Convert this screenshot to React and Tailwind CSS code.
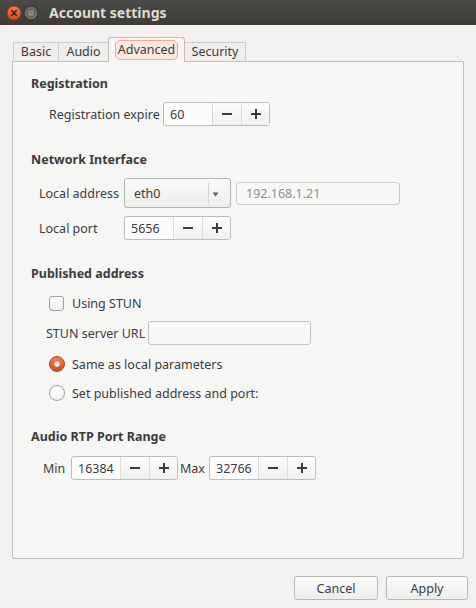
import React from "react";

function Minus() {
  return (
    <svg width="10" height="10" viewBox="0 0 10 10">
      <rect x="0" y="4" width="10" height="2" fill="#3c3c3c" />
    </svg>
  );
}
function Plus() {
  return (
    <svg width="10" height="10" viewBox="0 0 10 10">
      <rect x="0" y="4" width="10" height="2" fill="#3c3c3c" />
      <rect x="4" y="0" width="2" height="10" fill="#3c3c3c" />
    </svg>
  );
}

function Spin({ value }) {
  return (
    <div className="flex h-[24px] rounded-[3px] border border-[#bdbdba] bg-[#fcfcfc] overflow-hidden">
      <div className="w-[48px] flex items-center pl-[6px] pt-[2px] text-[#3c3c3c]">{value}</div>
      <div className="w-[29px] border-l border-[#d9d9d6] flex items-center justify-center bg-gradient-to-b from-[#fbfbfb] to-[#f1f1f0]">
        <Minus />
      </div>
      <div className="w-[28px] border-l border-[#d9d9d6] flex items-center justify-center bg-gradient-to-b from-[#fbfbfb] to-[#f1f1f0]">
        <Plus />
      </div>
    </div>
  );
}

function Heading({ children, className }) {
  return (
    <div className={"h-[18px] leading-[18px] pt-[1px] font-bold text-[#3c3c3c] " + className}>{children}</div>
  );
}

function Radio({ checked }) {
  if (checked) {
    return (
      <svg width="16" height="16" viewBox="0 0 16 16">
        <defs>
          <linearGradient id="rg" x1="0" y1="0" x2="0" y2="1">
            <stop offset="0" stopColor="#f2865a" />
            <stop offset="1" stopColor="#d34d1d" />
          </linearGradient>
        </defs>
        <circle cx="8" cy="8" r="7.5" fill="url(#rg)" stroke="#a9441b" strokeWidth="1" />
        <circle cx="8" cy="8" r="2.6" fill="#ffffff" />
      </svg>
    );
  }
  return (
    <svg width="16" height="16" viewBox="0 0 16 16">
      <defs>
        <linearGradient id="rw" x1="0" y1="0" x2="0" y2="1">
          <stop offset="0" stopColor="#ffffff" />
          <stop offset="1" stopColor="#f2f2f1" />
        </linearGradient>
      </defs>
      <circle cx="8" cy="8" r="7.5" fill="url(#rw)" stroke="#9f9f9c" strokeWidth="1" />
    </svg>
  );
}

export default function App() {
  return (
    <div className="w-[476px] h-[608px] bg-[#f2f1f0] flex flex-col font-['Noto_Sans',sans-serif] text-[12.5px] text-[#3c3c3c] overflow-hidden">
      {/* Title bar */}
      <div className="h-[25px] bg-gradient-to-b from-[#4b4a46] to-[#3c3b37] flex items-center pl-[6px]">
        <svg width="16" height="16" viewBox="0 0 16 16">
          <defs>
            <linearGradient id="cg" x1="0" y1="0" x2="0" y2="1">
              <stop offset="0" stopColor="#f47a4e" />
              <stop offset="1" stopColor="#dc4a1a" />
            </linearGradient>
          </defs>
          <circle cx="8" cy="8" r="7" fill="url(#cg)" stroke="#8e3a18" strokeWidth="1" />
          <path d="M5.6 5.6 L10.4 10.4 M10.4 5.6 L5.6 10.4" stroke="#3b2014" strokeWidth="1.4" strokeLinecap="round" />
        </svg>
        <svg width="16" height="16" viewBox="0 0 16 16" className="ml-[1px]">
          <circle cx="8" cy="8" r="7" fill="#6f6e69" stroke="#2e2d2a" strokeWidth="1" />
          <rect x="4.5" y="4.5" width="7" height="7" rx="2" fill="#85837e" stroke="#5a5955" strokeWidth="1" />
        </svg>
        <div className="ml-[10px] font-bold text-[14px] text-[#dfdbd2] leading-[25px]">Account settings</div>
      </div>

      {/* Tabs */}
      <div className="mt-[12px] ml-[13px] h-[24px] flex items-end">
        <div className="w-[45px] h-[19px] pt-[1px] border-l border-t border-[#cdccc9] bg-[#efeeec] flex items-center justify-center">Basic</div>
        <div className="w-[50px] h-[19px] pt-[1px] border-l border-t border-[#cdccc9] bg-[#efeeec] flex items-center justify-center">Audio</div>
        <div className="relative z-10 -mb-px w-[77px] h-[25px] border-l border-r border-t border-[#c0bfbc] rounded-t-[3px] bg-[#f6f6f5] flex items-start justify-center pt-[2px]">
          <div className="w-[63px] h-[20px] pt-[1px] rounded-[5px] border border-[#eda98a] bg-[#fbe8df] flex items-center justify-center">Advanced</div>
        </div>
        <div className="w-[61px] h-[19px] pt-[1px] border-r border-t border-[#cdccc9] bg-[#efeeec] flex items-center justify-center">Security</div>
      </div>

      {/* Panel */}
      <div className="mx-[12px] h-[498px] border border-[#c0bfbc] rounded-b-[3px] bg-[#f6f6f5] flex flex-col pl-[18px]">
        <Heading className="mt-[12px]">Registration</Heading>
        <div className="mt-[10px] h-[24px] flex items-center ml-[18px]">
          <div className="w-[114px] pt-[2px] whitespace-nowrap">Registration expire</div>
          <Spin value="60" />
        </div>

        <Heading className="mt-[24px]">Network Interface</Heading>
        <div className="mt-[10px] h-[30px] flex items-center ml-[8px]">
          <div className="w-[85px] pt-[2px] whitespace-nowrap">Local address</div>
          <div className="relative w-[107px] h-[30px] pt-[2px] rounded-[3px] border border-[#b3b3b0] bg-gradient-to-b from-[#fbfbfb] to-[#ededec] flex items-center pl-[9px]">
            <span>eth0</span>
            <div className="absolute left-[83px] top-[4px] h-[20px] border-l border-[#d3d3d0]" />
            <svg width="7" height="5" viewBox="0 0 7 5" className="absolute left-[87px] top-[13px]">
              <path d="M0.5 0.5 L6.5 0.5 L3.5 4.5 Z" fill="#5d5d5d" />
            </svg>
          </div>
          <div className="ml-[5px] w-[164px] h-[23px] pt-[2px] rounded-[3px] border border-[#cbcbc8] bg-[#f7f7f6] flex items-center pl-[9px] text-[#8d9092]">192.168.1.21</div>
        </div>
        <div className="mt-[8px] h-[24px] flex items-center ml-[8px]">
          <div className="w-[85px] pt-[2px] whitespace-nowrap">Local port</div>
          <Spin value="5656" />
        </div>

        <Heading className="mt-[24px]">Published address</Heading>
        <div className="mt-[11px] h-[20px] flex items-center ml-[18px]">
          <div className="w-[15px] h-[15px] rounded-[3px] border border-[#9f9f9c] bg-gradient-to-b from-[#ffffff] to-[#efefee]" />
          <div className="ml-[8px] pt-[2px]">Using STUN</div>
        </div>
        <div className="mt-[8px] h-[24px] flex items-center ml-[15px]">
          <div className="w-[102px] pt-[2px] whitespace-nowrap">STUN server URL</div>
          <div className="w-[163px] h-[24px] rounded-[3px] border border-[#c4c4c1] bg-[#f8f8f7]" />
        </div>
        <div className="mt-[9px] h-[20px] flex items-center ml-[18px]">
          <Radio checked />
          <div className="ml-[7px] pt-[2px]">Same as local parameters</div>
        </div>
        <div className="mt-[9px] h-[20px] flex items-center ml-[18px]">
          <Radio />
          <div className="ml-[7px] pt-[2px]">Set published address and port:</div>
        </div>

        <Heading className="mt-[24px]">Audio RTP Port Range</Heading>
        <div className="mt-[11px] h-[24px] flex items-center ml-[12px]">
          <div className="w-[28px] pt-[2px] whitespace-nowrap">Min</div>
          <Spin value="16384" />
          <div className="w-[31px] pl-[2px] pt-[2px] whitespace-nowrap">Max</div>
          <Spin value="32766" />
        </div>
      </div>

      {/* Buttons */}
      <div className="mt-[17px] flex justify-end pr-[8px] gap-[8px]">
        <div className="w-[84px] h-[24px] pt-[2px] rounded-[3px] border border-[#b6b6b3] bg-gradient-to-b from-[#fcfcfc] to-[#ededec] flex items-center justify-center">Cancel</div>
        <div className="w-[82px] h-[24px] pt-[2px] rounded-[3px] border border-[#b6b6b3] bg-gradient-to-b from-[#fcfcfc] to-[#ededec] flex items-center justify-center">Apply</div>
      </div>
    </div>
  );
}
